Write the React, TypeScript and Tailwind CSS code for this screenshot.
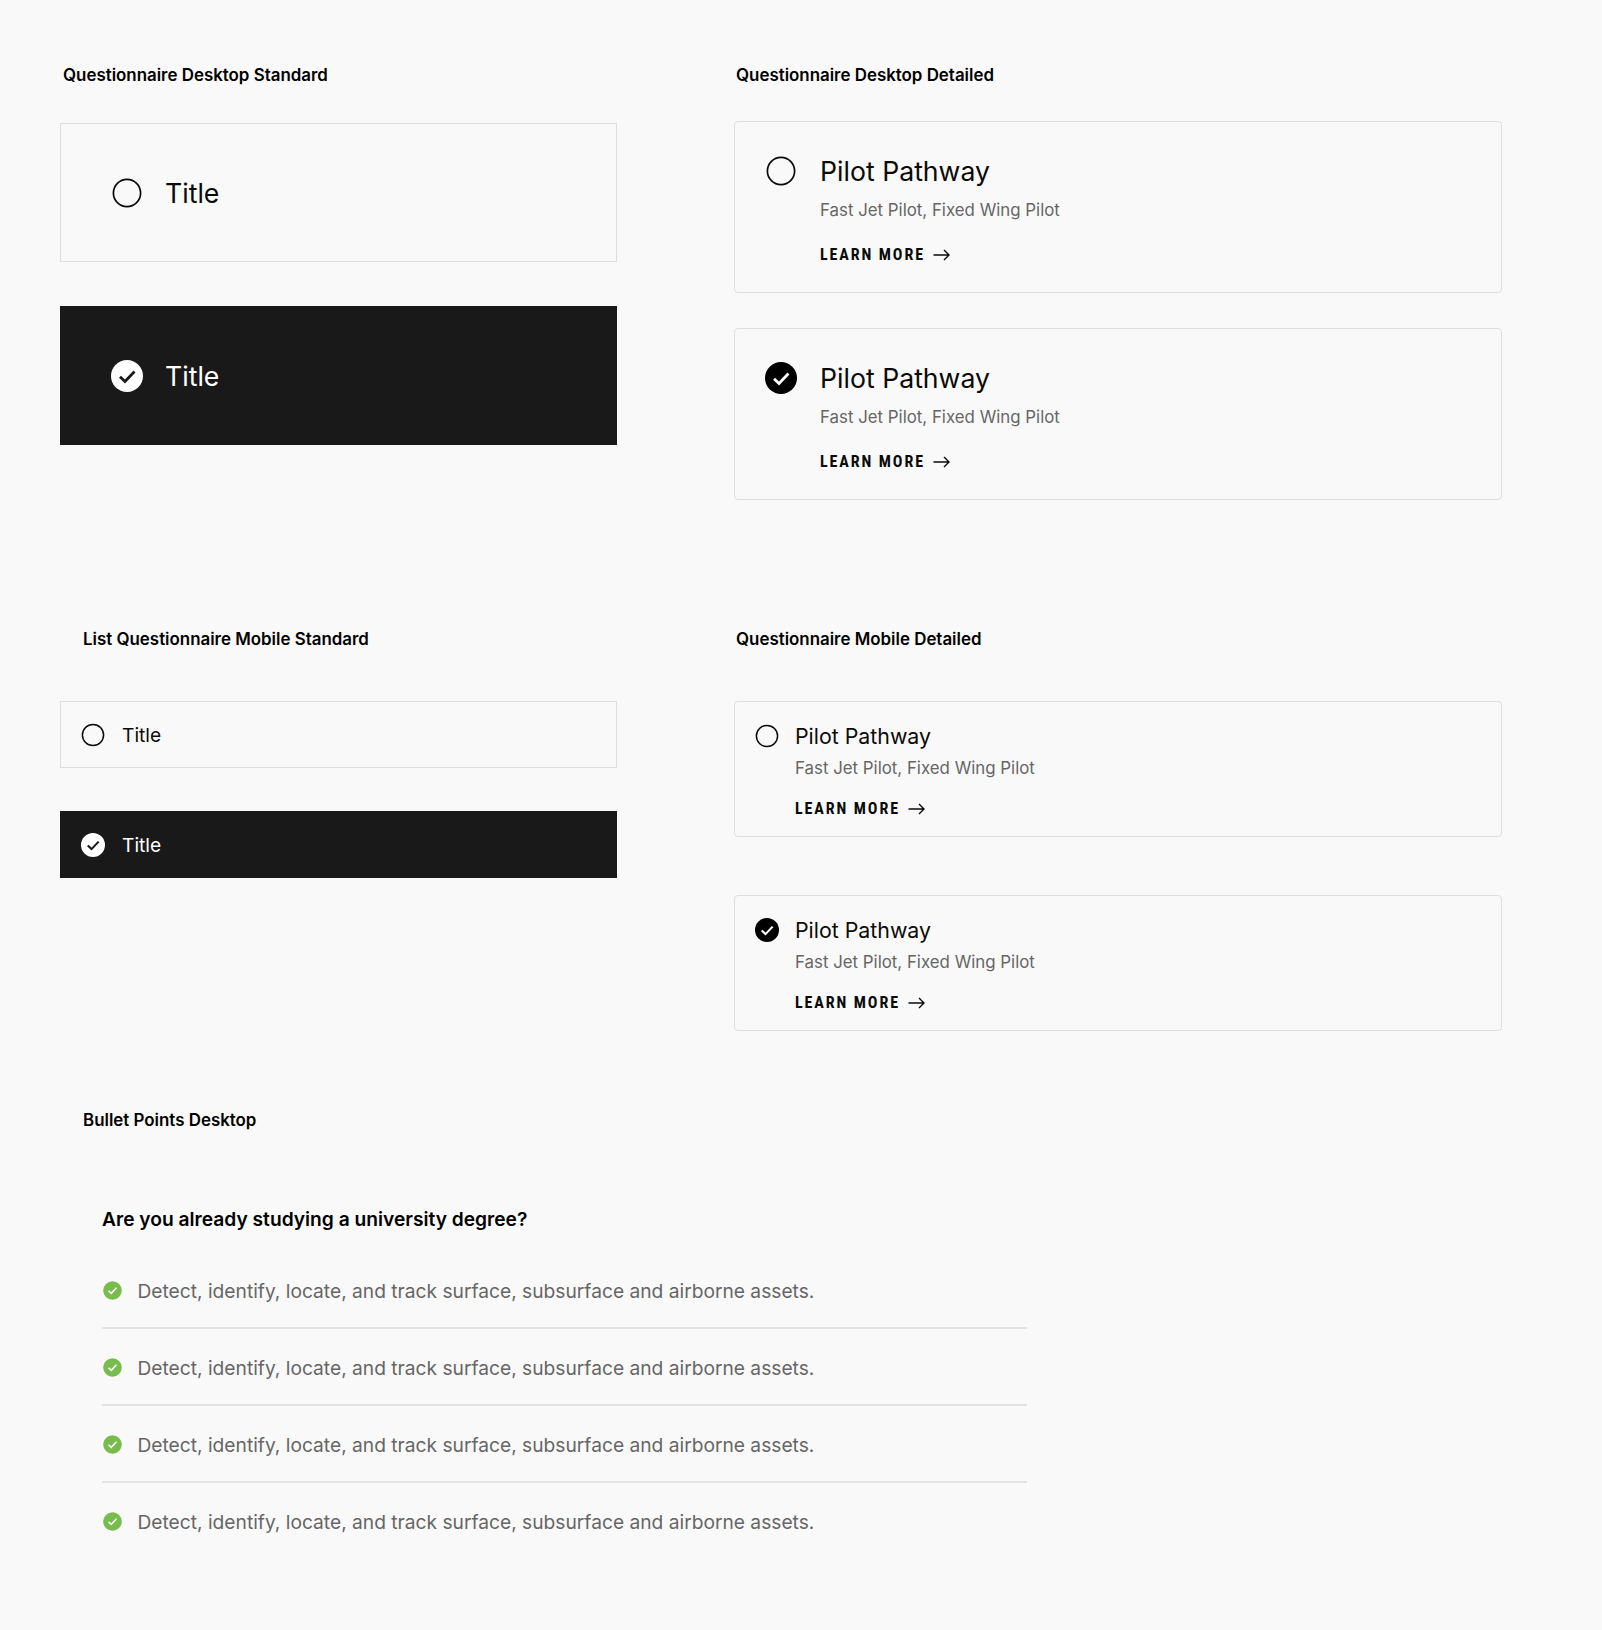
import React from "react";

const Check = ({ size, color }: { size: number; color: string }) => (
  <svg width={size} height={size} viewBox="0 0 32 32" fill="none" className="block">
    <path d="M9 16.8 L14 21.5 L23.5 11.5" stroke={color} strokeWidth="2.8" />
  </svg>
);

const Radio = ({ size, checked, fill, tick }: { size: number; checked?: boolean; fill?: string; tick?: string }) =>
  checked ? (
    <div
      className="rounded-full flex items-center justify-center shrink-0"
      style={{ width: size, height: size, background: fill }}
    >
      <Check size={size} color={tick || "#fff"} />
    </div>
  ) : (
    <svg width={size} height={size} viewBox={`0 0 ${size} ${size}`} fill="none" className="block shrink-0">
      <circle
        cx={size / 2}
        cy={size / 2}
        r={size === 32 ? 13.6 : 10.6}
        stroke="#0a0a0a"
        strokeWidth={size === 32 ? 1.7 : 1.5}
      />
    </svg>
  );

const Arrow = () => (
  <svg width="17" height="12" viewBox="0 0 17 12" fill="none" className="block">
    <path d="M0.5 6 H16 M11 1 L16 6 L11 11" stroke="#0a0a0a" strokeWidth="1.4" />
  </svg>
);

const Learn = () => (
  <div className="flex items-center gap-[8px]">
    <span className="font-['Roboto',sans-serif] font-stretch-condensed font-bold text-[16px] leading-5 tracking-[1.9px] text-[#0a0a0a]">
      LEARN MORE
    </span>
    <Arrow />
  </div>
);

const Label = ({ children, className }: { children: React.ReactNode; className: string }) => (
  <div className={`text-[16.9px] leading-6 font-semibold text-black ${className}`}>{children}</div>
);

const StdDesktop = ({ dark }: { dark?: boolean }) => (
  <div
    className={`h-[139px] flex items-center pl-[50px] gap-[22px] border ${
      dark ? "bg-[#191919] border-[#191919]" : "border-[#dedede]"
    }`}
  >
    <Radio size={32} checked={dark} fill="#fff" tick="#191919" />
    <span className={`text-[26.67px] leading-9 ${dark ? "text-white" : "text-[#0a0a0a]"}`}>Title</span>
  </div>
);

const StdMobile = ({ dark }: { dark?: boolean }) => (
  <div
    className={`h-[67px] flex items-center pl-[20px] gap-[17px] border ${
      dark ? "bg-[#191919] border-[#191919]" : "border-[#dedede]"
    }`}
  >
    <Radio size={24} checked={dark} fill="#fff" tick="#191919" />
    <span className={`text-[19.2px] leading-7 ${dark ? "text-white" : "text-[#0a0a0a]"}`}>Title</span>
  </div>
);

const DetDesktop = ({ checked }: { checked?: boolean }) => (
  <div className="h-[172px] rounded-[4px] border border-[#dedede] pt-[33px] pl-[30px] flex gap-[23px]">
    <Radio size={32} checked={checked} fill="#000" tick="#fff" />
    <div className="flex flex-col">
      <div className="text-[26.67px] leading-[32px] text-[#0a0a0a]">Pilot Pathway</div>
      <div className="mt-[11px] text-[16.85px] leading-6 text-[#666]">Fast Jet Pilot, Fixed Wing Pilot</div>
      <div className="mt-[23px]">
        <Learn />
      </div>
    </div>
  </div>
);

const DetMobile = ({ checked }: { checked?: boolean }) => (
  <div className="h-[136px] rounded-[4px] border border-[#dedede] pt-[20px] pl-[20px] flex gap-[16px]">
    <div className="pt-[2px]">
      <Radio size={24} checked={checked} fill="#000" tick="#fff" />
    </div>
    <div className="flex flex-col">
      <div className="text-[21.33px] leading-7 text-[#0a0a0a]">Pilot Pathway</div>
      <div className="mt-[6px] text-[16.85px] leading-6 text-[#666]">Fast Jet Pilot, Fixed Wing Pilot</div>
      <div className="mt-[19px]">
        <Learn />
      </div>
    </div>
  </div>
);

const Bullet = ({ last }: { last?: boolean }) => (
  <div
    className={`flex items-center gap-[16px] pl-[0.5px] pt-[2px] ${
      last ? "h-[75px]" : "h-[77px] border-b-2 border-[#e3e3e3]"
    }`}
  >
    <svg width="19" height="19" viewBox="0 0 20 20" fill="none" className="block shrink-0">
      <circle cx="10" cy="10" r="9.8" fill="#78bc4e" />
      <path d="M5.8 10.3 L8.7 13 L14.2 7.2" stroke="#fff" strokeWidth="1.6" />
    </svg>
    <span className="text-[19.2px] leading-7 text-[#666]">
      Detect, identify, locate, and track surface, subsurface and airborne assets.
    </span>
  </div>
);

export default function App() {
  return (
    <div className="min-h-[1630px] bg-[#f9f9f9] font-['Inter',sans-serif] pt-[63px] pl-[60px]">
      <div className="flex gap-[117px]">
        <div className="w-[557px]">
          <Label className="pl-[3px]">Questionnaire Desktop Standard</Label>
          <div className="mt-[36px] flex flex-col gap-[44px]">
            <StdDesktop />
            <StdDesktop dark />
          </div>
        </div>
        <div className="w-[768px]">
          <Label className="pl-[2px]">Questionnaire Desktop Detailed</Label>
          <div className="mt-[34px] flex flex-col gap-[35px]">
            <DetDesktop />
            <DetDesktop checked />
          </div>
        </div>
      </div>
      <div className="flex gap-[117px] mt-[127px]">
        <div className="w-[557px]">
          <Label className="pl-[23px]">List Questionnaire Mobile Standard</Label>
          <div className="mt-[50px] flex flex-col gap-[43px]">
            <StdMobile />
            <StdMobile dark />
          </div>
        </div>
        <div className="w-[768px]">
          <Label className="pl-[2px]">Questionnaire Mobile Detailed</Label>
          <div className="mt-[50px] flex flex-col gap-[58px]">
            <DetMobile />
            <DetMobile checked />
          </div>
        </div>
      </div>
      <Label className="pl-[23px] mt-[77px]">Bullet Points Desktop</Label>
      <div className="ml-[42px] w-[925px] mt-[73px]">
        <div className="text-[19.2px] leading-7 font-semibold text-black">Are you already studying a university degree?</div>
        <div className="mt-[19px]">
          <Bullet />
          <Bullet />
          <Bullet />
          <Bullet last />
        </div>
      </div>
    </div>
  );
}
